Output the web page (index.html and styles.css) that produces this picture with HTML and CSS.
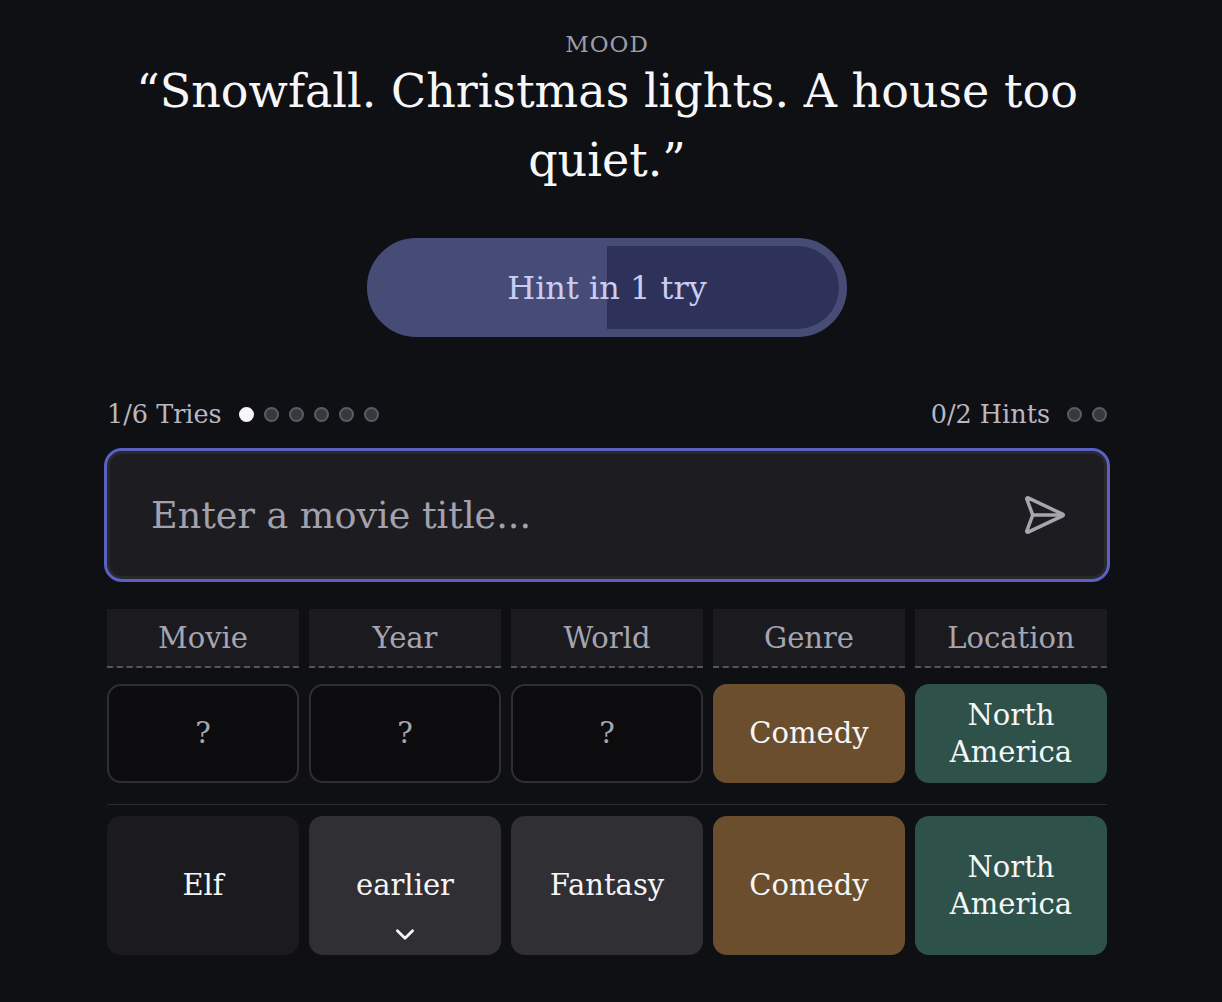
FILE: index.html
```html
<!DOCTYPE html>
<html lang="en">
<head>
    <meta charset="UTF-8">
    <meta name="viewport" content="width=device-width, initial-scale=1.0">
    <title>Movie Mood</title>
    <link rel="stylesheet" href="styles.css">
</head>
<body>
    <main class="game">
        <section class="mood">
            <div class="mood-label">MOOD</div>
            <h1 class="mood-quote">“Snowfall. Christmas lights. A house too quiet.”</h1>
        </section>

        <button class="hint-btn" type="button">
            <span class="hint-rest"></span>
            <span class="hint-text">Hint in 1 try</span>
        </button>

        <div class="counters">
            <div class="counter">
                <span>1/6 Tries</span>
                <span class="dots">
                    <i class="dot used"></i><i class="dot"></i><i class="dot"></i><i class="dot"></i><i class="dot"></i><i class="dot"></i>
                </span>
            </div>
            <div class="counter">
                <span>0/2 Hints</span>
                <span class="dots">
                    <i class="dot"></i><i class="dot"></i>
                </span>
            </div>
        </div>

        <form class="guess" onsubmit="return false">
            <input class="guess-input" type="text" placeholder="Enter a movie title...">
            <button class="send" type="submit" aria-label="Submit guess">
                <svg width="46" height="46" viewBox="0 0 24 24" fill="none" stroke="currentColor" stroke-width="1.8" stroke-linecap="round" stroke-linejoin="round">
                    <path d="M3.714 3.048a.498.498 0 0 0-.683.627l2.843 7.627a2 2 0 0 1 0 1.396l-2.842 7.627a.498.498 0 0 0 .682.627l18-8.5a.5.5 0 0 0 0-.904z"/>
                    <path d="M6 12h16"/>
                </svg>
            </button>
        </form>

        <div class="board">
            <div class="head">Movie</div>
            <div class="head">Year</div>
            <div class="head">World</div>
            <div class="head">Genre</div>
            <div class="head">Location</div>

            <div class="cell empty">?</div>
            <div class="cell empty">?</div>
            <div class="cell empty">?</div>
            <div class="cell close">Comedy</div>
            <div class="cell match">North America</div>

            <div class="divider"></div>

            <div class="cell guess-row title">Elf</div>
            <div class="cell guess-row miss">
                earlier
                <svg class="arrow" width="26" height="26" viewBox="0 0 24 24" fill="none" stroke="currentColor" stroke-width="2.6" stroke-linecap="round" stroke-linejoin="round">
                    <path d="m5 9 7 7 7-7"/>
                </svg>
            </div>
            <div class="cell guess-row miss">Fantasy</div>
            <div class="cell guess-row close">Comedy</div>
            <div class="cell guess-row match">North America</div>
        </div>
    </main>
</body>
</html>
```

FILE: styles.css
```css
body {
    margin: 0;
    padding: 0 8px 0 0;
    background: #0f1013;
    color: #f4f4f6;
    font-family: "DejaVu Serif", "Liberation Serif", serif;
}
.game {
    width: 1000px;
    margin: 0 auto;
    padding-top: 28px;
    display: flex;
    flex-direction: column;
    align-items: center;
}
.mood {
    text-align: center;
}
.mood-label {
    font-size: 23px;
    line-height: 32px;
    letter-spacing: 1px;
    color: #9d9ca8;
}
.mood-quote {
    margin: -3px 0 3px;
    font-size: 46px;
    font-weight: normal;
    line-height: 69px;
    color: #f7f7f9;
}
.hint-btn {
    position: relative;
    margin-top: 40px;
    width: 480px;
    height: 99px;
    border: 8px solid #474c77;
    border-radius: 50px;
    background: #474c77;
    overflow: hidden;
    font-family: inherit;
    cursor: pointer;
}
.hint-rest {
    position: absolute;
    top: 0;
    bottom: 0;
    left: 50%;
    right: 0;
    background: #2e3159;
}
.hint-text {
    position: relative;
    font-size: 32px;
    color: #c9cdf4;
}
.counters {
    width: 100%;
    margin-top: 62px;
    display: flex;
    justify-content: space-between;
    align-items: center;
}
.counter {
    display: flex;
    align-items: center;
    gap: 17px;
    font-size: 25.5px;
    line-height: 30px;
    color: #b9b8c2;
}
.dots {
    display: flex;
    gap: 10px;
}
.dot {
    width: 11px;
    height: 11px;
    border-radius: 50%;
    background: #38383e;
    border: 2px solid #5c5c64;
}
.dot.used {
    background: #f7f7fa;
    border-color: #f7f7fa;
}
.guess {
    box-sizing: border-box;
    width: 1006px;
    height: 134px;
    margin-top: 19px;
    display: flex;
    align-items: center;
    padding: 0 40px 0 42px;
    border: 3px solid #5b60c3;
    border-radius: 18px;
    background: #1d1d21;
    box-shadow: inset 0 0 0 3px #28282d;
}
.guess-input {
    flex: 1;
    border: none;
    outline: none;
    background: transparent;
    font-family: inherit;
    font-size: 36.5px;
    color: #f4f4f6;
}
.guess-input::placeholder {
    color: #a2a1ad;
}
.send {
    display: flex;
    padding: 0;
    border: none;
    background: none;
    color: #a6a5b0;
    cursor: pointer;
}
.board {
    width: 100%;
    margin-top: 27px;
    display: grid;
    grid-template-columns: repeat(5, 1fr);
    column-gap: 10px;
}
.head {
    height: 57px;
    display: flex;
    align-items: center;
    justify-content: center;
    background: #1b1b1f;
    border-bottom: 2px dashed #55555c;
    font-size: 29px;
    color: #a6a5b1;
}
.cell {
    box-sizing: border-box;
    height: 99px;
    margin-top: 16px;
    padding: 0 16px;
    display: flex;
    align-items: center;
    justify-content: center;
    text-align: center;
    border-radius: 14px;
    font-size: 29px;
    line-height: 37px;
    color: #f6f6f8;
}
.cell.empty {
    background: #0c0c0e;
    border: 2px solid #2e2e33;
    color: #a6a5b1;
}
.cell.close {
    background: #6a4e2d;
}
.cell.match {
    background: #2e5249;
}
.divider {
    grid-column: 1 / -1;
    height: 1px;
    margin-top: 21px;
    background: #2a2a2f;
}
.cell.guess-row {
    position: relative;
    height: 139px;
    margin-top: 11px;
}
.cell.title {
    background: #1b1b1f;
}
.cell.miss {
    background: #2f2f34;
}
.arrow {
    position: absolute;
    left: 50%;
    bottom: 8px;
    margin-left: -13px;
    color: #f6f6f8;
}
```
